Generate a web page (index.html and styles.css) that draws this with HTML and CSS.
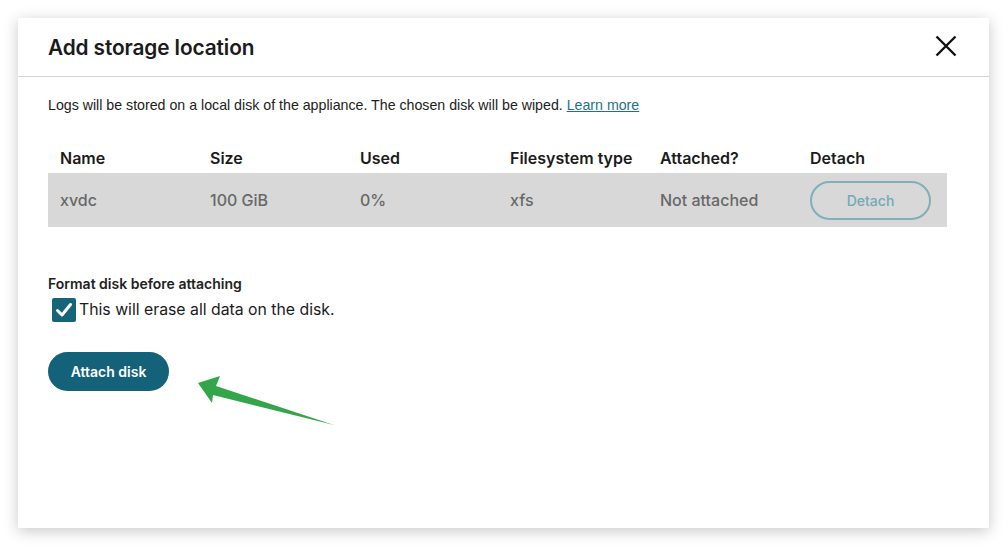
FILE: index.html
```html
<!DOCTYPE html>
<html lang="en">
<head>
<meta charset="utf-8">
<title>Add storage location</title>
<link rel="stylesheet" href="styles.css">
</head>
<body>
<div class="page">
  <div class="dialog">
    <div class="dialog-header">
      <h1 class="dialog-title">Add storage location</h1>
      <button class="close-btn" aria-label="Close">
        <svg width="22" height="22" viewBox="0 0 22 22"><path d="M1.5 1.5 L20.5 20.5 M20.5 1.5 L1.5 20.5" stroke="#111" stroke-width="2.4" fill="none"/></svg>
      </button>
    </div>
    <div class="dialog-body">
      <p class="intro">Logs will be stored on a local disk of the appliance. The chosen disk will be wiped. <a class="link" href="#">Learn more</a></p>
      <div class="disk-table">
        <div class="row head">
          <div class="cell">Name</div>
          <div class="cell">Size</div>
          <div class="cell">Used</div>
          <div class="cell">Filesystem type</div>
          <div class="cell">Attached?</div>
          <div class="cell">Detach</div>
        </div>
        <div class="row data">
          <div class="cell">xvdc</div>
          <div class="cell">100 GiB</div>
          <div class="cell">0%</div>
          <div class="cell">xfs</div>
          <div class="cell">Not attached</div>
          <div class="cell"><button class="detach-btn" disabled>Detach</button></div>
        </div>
      </div>
      <div class="format-label">Format disk before attaching</div>
      <label class="check-row">
        <span class="checkbox">
          <svg width="18" height="18" viewBox="0 0 18 18"><path d="M2.5 9.5 L7 14 L15.5 3.5" stroke="#fff" stroke-width="3" fill="none" stroke-linecap="round" stroke-linejoin="round"/></svg>
        </span>
        <span class="check-text">This will erase all data on the disk.</span>
      </label>
      <div class="actions">
        <button class="attach-btn">Attach disk</button>
      </div>
    </div>
    <svg class="arrow" width="1008" height="547" viewBox="0 0 1008 547">
      <polygon points="198,383 220,376 216,386 334,425 213,395 212,403" fill="#34a64a"/>
    </svg>
  </div>
</div>
</body>
</html>
```

FILE: styles.css
```css
* { box-sizing: border-box; }
html, body { margin: 0; padding: 0; background: #ffffff; }
body { font-family: "Inter", "Noto Sans", sans-serif; color: #1a1a1a; }
.page { padding: 18px 19px 19px 18px; width: 1008px; height: 547px; }
.dialog {
  width: 971px;
  height: 510px;
  background: #fff;
  box-shadow: 0 3px 14px rgba(0,0,0,0.22);
}
.dialog-header {
  height: 59px;
  border-bottom: 1px solid #d4d4d4;
  display: flex;
  align-items: center;
  justify-content: space-between;
  padding: 0 32px 0 30px;
}
.dialog-title {
  margin: 0;
  font-size: 20.8px;
  font-weight: 600;
  color: #1b1b1b;
  letter-spacing: -0.1px;
}
.close-btn {
  border: 0; background: none; padding: 0; width: 22px; height: 22px;
  display: flex; margin-top: -2px;
}
.dialog-body { padding: 18px 42px 0 30px; }
.intro {
  margin: 0;
  font-family: "Liberation Sans", Arial, sans-serif;
  font-size: 14.2px;
  line-height: 20px;
  color: #222;
}
.link { color: #1c7387; text-decoration: underline; }
.disk-table { margin-top: 28px; width: 899px; }
.row { display: grid; grid-template-columns: repeat(6, 150px); align-items: center; }
.row.head { height: 30px; font-size: 16px; font-weight: 600; color: #1b1b1b; }
.row.data { height: 54px; background: #d8d8d8; font-size: 16px; font-weight: 500; color: #686868; }
.cell { padding-left: 12px; white-space: nowrap; }
.detach-btn {
  width: 121px; height: 39px;
  border: 2px solid #7fb0ba;
  border-radius: 20px;
  background: transparent;
  color: #74a9b4;
  font-family: inherit;
  font-size: 14px;
  font-weight: 500;
}
.format-label {
  margin-top: 47px;
  font-size: 14px;
  font-weight: 600;
  line-height: 20px;
  color: #222;
}
.check-row { display: flex; align-items: center; margin-top: 4px; padding-left: 4px; gap: 3px; }
.checkbox {
  width: 24px; height: 24px; background: #14647a; border-radius: 2px;
  display: flex; align-items: center; justify-content: center;
}
.check-text { font-size: 15.8px; line-height: 24px; color: #1b1b1b; }
.actions { margin-top: 30px; }
.attach-btn {
  width: 121px; height: 39px;
  border: 0; border-radius: 20px;
  background: #14627a;
  color: #fff;
  font-family: inherit;
  font-size: 14px;
  font-weight: 600;
}
.arrow { position: absolute; left: 0; top: 0; pointer-events: none; }
```
